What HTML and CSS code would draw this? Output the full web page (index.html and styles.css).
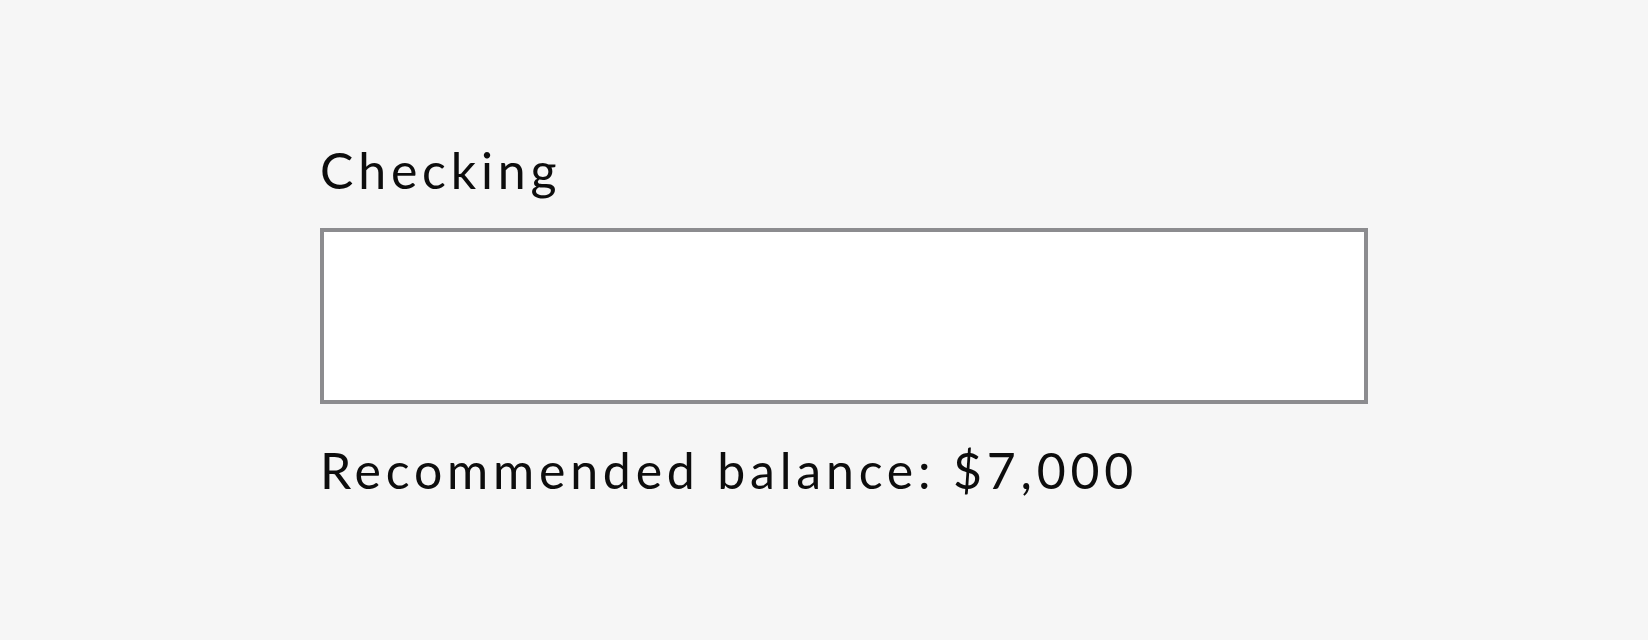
FILE: index.html
```html
<!DOCTYPE html>
<html>
<head>
<meta charset="utf-8">
<link rel="stylesheet" href="styles.css">
</head>
<body>
<div class="page">
  <div class="field">
    <label class="label" for="checking">Checking</label>
    <input class="input" id="checking" type="text">
    <p class="hint">Recommended balance: $7,000</p>
  </div>
</div>
</body>
</html>
```
FILE: styles.css
```css
html, body {
  margin: 0;
  padding: 0;
  background: #f6f6f6;
}
.page {
  width: 1648px;
  height: 640px;
  box-sizing: border-box;
  padding: 140px 0 0 320px;
  font-family: Lato, "Noto Sans", sans-serif;
  color: #0d0d0d;
}
.field {
  display: flex;
  flex-direction: column;
  width: 1048px;
}
.label {
  font-size: 50px;
  line-height: 60px;
  height: 60px;
  margin-bottom: 28px;
  letter-spacing: 4.8px;
}
.input {
  box-sizing: border-box;
  width: 1048px;
  height: 176px;
  border: 4px solid #8c8c8f;
  background: #fff;
  margin: 0;
  padding: 0 20px;
  outline: none;
}
.hint {
  margin: 36px 0 0;
  font-size: 50px;
  line-height: 60px;
  letter-spacing: 4.8px;
}
```
